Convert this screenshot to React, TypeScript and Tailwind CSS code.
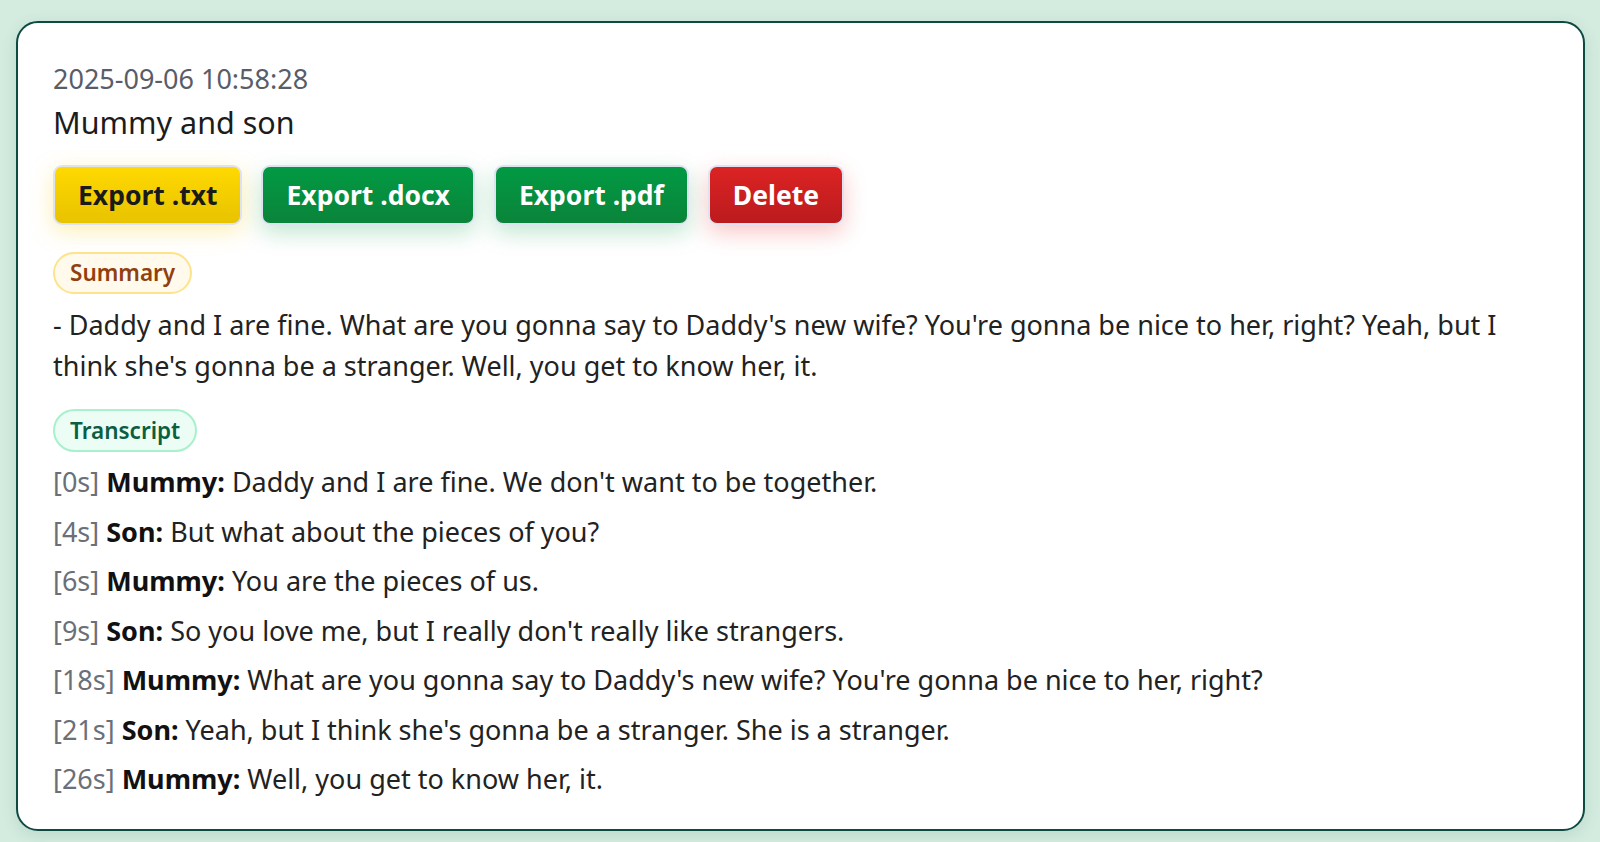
const transcript = [
  { t: "0s", who: "Mummy", text: "Daddy and I are fine. We don't want to be together." },
  { t: "4s", who: "Son", text: "But what about the pieces of you?" },
  { t: "6s", who: "Mummy", text: "You are the pieces of us." },
  { t: "9s", who: "Son", text: "So you love me, but I really don't really like strangers." },
  { t: "18s", who: "Mummy", text: "What are you gonna say to Daddy's new wife? You're gonna be nice to her, right?" },
  { t: "21s", who: "Son", text: "Yeah, but I think she's gonna be a stranger. She is a stranger." },
  { t: "26s", who: "Mummy", text: "Well, you get to know her, it." },
]

const buttonBase =
  "h-[60px] rounded-[9px] border-2 border-[#dfe3f1] px-[23px] text-[26.5px] font-bold leading-none"

export default function App() {
  return (
    <div className="min-h-[842px] bg-[#d4ece0] pl-[16px] pr-[15px] pt-[21px] pb-[10px] font-['Segoe_UI','Noto_Sans',sans-serif]">
      <div className="rounded-[22px] border-2 border-[#0d4a42] bg-white px-[35px] pt-[37px] pb-[29px] shadow-[0_4px_16px_rgba(16,80,60,0.12)]">
        <div className="text-[27px] leading-[38px] text-[#585d68]">2025-09-06 10:58:28</div>
        <div className="mt-[4px] text-[30.5px] leading-[40px] text-[#1c1c1c]">Mummy and son</div>

        <div className="mt-[23px] flex gap-[19px]">
          <button
            type="button"
            className={`${buttonBase} bg-gradient-to-b from-[#ffd900] to-[#e8c300] text-[#1a1a1a] shadow-[0_6px_22px_rgba(250,210,40,0.35)]`}
          >
            Export .txt
          </button>
          <button
            type="button"
            className={`${buttonBase} bg-gradient-to-b from-[#019a43] to-[#0a843a] text-white shadow-[0_8px_22px_rgba(16,160,80,0.25)]`}
          >
            Export .docx
          </button>
          <button
            type="button"
            className={`${buttonBase} bg-gradient-to-b from-[#019a43] to-[#0a843a] text-white shadow-[0_8px_22px_rgba(16,160,80,0.25)]`}
          >
            Export .pdf
          </button>
          <button
            type="button"
            className={`${buttonBase} bg-gradient-to-b from-[#dc2323] to-[#bb1b1e] text-white shadow-[0_8px_22px_rgba(230,40,40,0.25)]`}
          >
            Delete
          </button>
        </div>

        <div className="mt-[27px] inline-flex h-[42px] items-center rounded-full border-2 border-[#fde48c] bg-[#fffaeb] px-[15px] text-[22.5px] font-semibold text-[#91400d]">
          Summary
        </div>
        <p className="mt-[10px] text-[27px] leading-[41px] text-[#222]">
          - Daddy and I are fine. What are you gonna say to Daddy's new wife? You're gonna be nice to her, right? Yeah, but I think she's gonna be a stranger. Well, you get to know her, it.
        </p>

        <div className="mt-[23px] inline-flex h-[43px] items-center rounded-full border-2 border-[#a9f0cd] bg-[#ecfdf5] px-[15px] text-[22.5px] font-semibold text-[#0a5e42]">
          Transcript
        </div>
        <div className="mt-[10px] flex flex-col gap-[9px]">
          {transcript.map((line) => (
            <div key={line.t} className="text-[27px] leading-[40.5px] text-[#222]">
              <span className="text-[#6b6f78]">[{line.t}]</span>{" "}
              <span className="font-bold text-[#111]">{line.who}:</span> {line.text}
            </div>
          ))}
        </div>
      </div>
    </div>
  )
}
